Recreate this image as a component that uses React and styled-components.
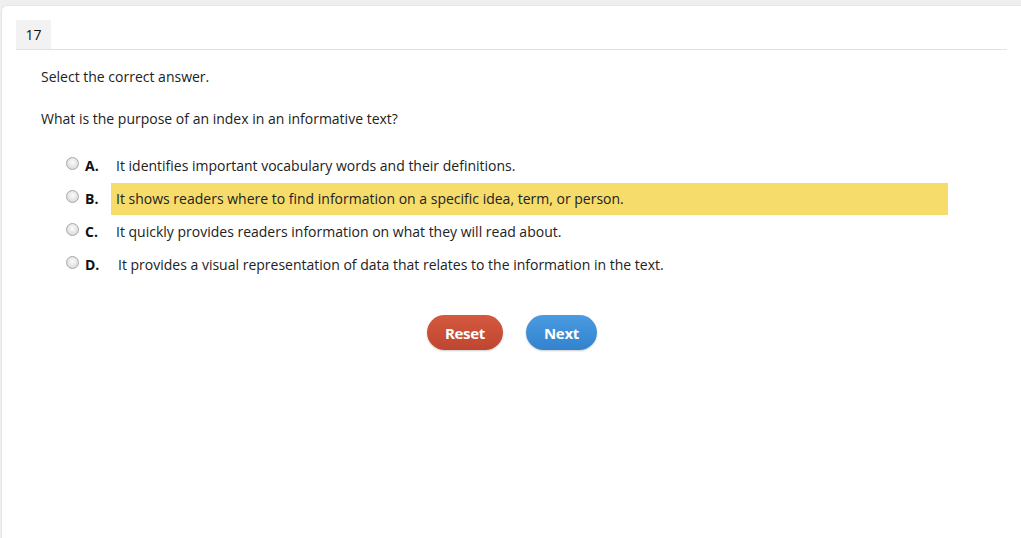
import React from 'react'
import styled, { createGlobalStyle } from 'styled-components'

const Global = createGlobalStyle`
  html, body { margin: 0; padding: 0; background: #efefef; }
  body { font-family: 'Open Sans', 'Liberation Sans', sans-serif; color: #222; }
`

const Card = styled.div`
  margin: 5px 0 0 1px;
  height: 540px;
  background: #fff;
  border: 1px solid #e6e6e6;
  border-right: none;
  border-radius: 6px 0 0 0;
  padding: 14px 14px 0 14px;
  box-sizing: border-box;
`

const Header = styled.div`
  display: flex;
  border-bottom: 1px solid #e2e2e2;
`

const Tab = styled.div`
  width: 35px;
  height: 29px;
  background: #f2f2f2;
  display: flex;
  align-items: center;
  justify-content: center;
  font-size: 14px;
  color: #111;
`

const Body = styled.div`
  padding: 17px 0 0 25px;
  font-size: 14px;
`

const Line = styled.p`
  margin: 0 0 ${p => p.$gap}px 0;
  line-height: 19px;
`

const Options = styled.div`
  display: flex;
  flex-direction: column;
`

const Option = styled.div`
  display: flex;
  align-items: center;
  height: 33px;
`

const Radio = styled.span`
  width: 11px;
  height: 11px;
  margin: -4px 0 0 25px;
  border-radius: 50%;
  border: 1px solid #a8a8a8;
  background: radial-gradient(circle at 50% 40%, #fbfbfb 0%, #e4e4e4 55%, #cfcfcf 100%);
  flex: none;
`

const Letter = styled.span`
  width: 26px;
  margin-left: 6px;
  font-weight: 700;
  color: #111;
`

const Answer = styled.div`
  width: 837px;
  height: 32px;
  display: flex;
  align-items: center;
  padding-left: ${p => p.$pad}px;
  box-sizing: border-box;
  background: ${p => (p.$selected ? '#f6dc6a' : 'transparent')};
`

const Actions = styled.div`
  display: flex;
  justify-content: center;
  gap: 23px;
  margin: 34px 0 0 -24px;
`

const Button = styled.button`
  height: 35px;
  width: ${p => p.$w}px;
  border: none;
  border-radius: 18px;
  color: #fff;
  font-family: 'Open Sans', 'Liberation Sans', sans-serif;
  font-weight: 700;
  font-size: 15px;
  letter-spacing: -0.3px;
  background: ${p => p.$bg};
  box-shadow: 0 1px 2px rgba(0, 0, 0, 0.2);
  cursor: pointer;
`

const options = [
  ['A.', 'It identifies important vocabulary words and their definitions.', false, 5],
  ['B.', 'It shows readers where to find information on a specific idea, term, or person.', true, 5],
  ['C.', 'It quickly provides readers information on what they will read about.', false, 5],
  ['D.', 'It provides a visual representation of data that relates to the information in the text.', false, 7],
]

export default function App() {
  return (
    <>
      <Global />
      <Card>
        <Header>
          <Tab>17</Tab>
        </Header>
        <Body>
          <Line $gap={23}>Select the correct answer.</Line>
          <Line $gap={21}>What is the purpose of an index in an informative text?</Line>
          <Options>
            {options.map(([letter, text, selected, pad]) => (
              <Option key={letter}>
                <Radio />
                <Letter>{letter}</Letter>
                <Answer $selected={selected} $pad={pad}>{text}</Answer>
              </Option>
            ))}
          </Options>
          <Actions>
            <Button $w={76} $bg="linear-gradient(#d4593f, #be4530)">Reset</Button>
            <Button $w={71} $bg="linear-gradient(#4a9be0, #3282cf)">Next</Button>
          </Actions>
        </Body>
      </Card>
    </>
  )
}
